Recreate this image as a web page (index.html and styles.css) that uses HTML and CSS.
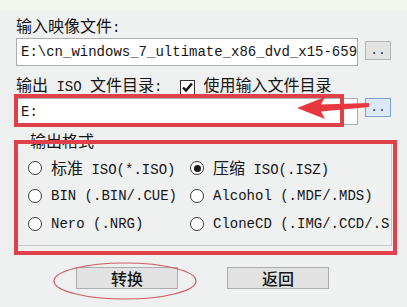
FILE: index.html
```html
<html>
<head>
  <meta charset="utf-8">
  <title>UltraISO - 格式转换</title>
  <link rel="stylesheet" href="styles.css">
</head>
<body>
  <div id="dlg">
    <div class="lbl"><span class="zh">输入映像文件</span>:</div>
    <div class="pathrow">
      <div class="field tall">E:\cn_windows_7_ultimate_x86_dvd_x15-659</div>
      <div class="browse">..</div>
    </div>

    <div class="optrow">
      <span class="lbl"><span class="zh">输出</span> ISO <span class="zh">文件目录</span>:</span>
      <span class="check">
        <svg width="15" height="15" viewBox="0 0 15 15">
          <rect x="0.5" y="0.5" width="14" height="14" fill="#fff" stroke="#333"/>
          <path d="M3 7.5 L6 10.5 L12 3.5" fill="none" stroke="#111" stroke-width="2.4"/>
        </svg>
      </span>
      <span class="zh">使用输入文件目录</span>
    </div>
    <div class="pathrow second">
      <div class="field">E:</div>
      <div class="browse hot">..</div>
    </div>

    <fieldset id="group">
      <legend><span class="zh">输出格式</span></legend>
      <div class="grid">
        <label class="opt"><span class="radio"></span><span><span class="zh">标准</span> ISO(*.ISO)</span></label>
        <label class="opt"><span class="radio on"></span><span><span class="zh">压缩</span> ISO(.ISZ)</span></label>
        <label class="opt"><span class="radio"></span><span>BIN (.BIN/.CUE)</span></label>
        <label class="opt"><span class="radio"></span><span>Alcohol (.MDF/.MDS)</span></label>
        <label class="opt"><span class="radio"></span><span>Nero (.NRG)</span></label>
        <label class="opt"><span class="radio"></span><span>CloneCD (.IMG/.CCD/.S</span></label>
      </div>
    </fieldset>

    <div class="actions">
      <div class="btn"><span class="zh">转换</span></div>
      <div class="btn"><span class="zh">返回</span></div>
    </div>
  </div>

  <!-- red marks drawn over the dialog -->
  <svg id="marks" width="407" height="307" viewBox="0 0 407 307">
    <rect x="16" y="96" width="326" height="29" fill="none" stroke="#e0404a" stroke-width="4"/>
    <rect x="16" y="142" width="379" height="111" fill="none" stroke="#e0404a" stroke-width="4"/>
    <polygon points="297,108 325,97 321,104.5 369,103 369,107 321,111.5 325,119" fill="#e8383f"/>
    <ellipse cx="125" cy="281" rx="71" ry="18" fill="none" stroke="#cf5866" stroke-width="1.2"/>
  </svg>
</body>
</html>
```

FILE: styles.css
```css
body {
  margin: 0;
  width: 407px;
  height: 307px;
  overflow: hidden;
  background: linear-gradient(#f3f6ef 0px, #f3f6ef 8px, #eff0f0 12px);
  color: #151515;
  font-family: "Liberation Mono", "Noto Sans CJK SC", monospace;
  font-size: 14px;
  line-height: 18px;
}
.zh {
  font-family: "Noto Sans CJK SC", sans-serif;
  font-size: 16px;
}
#dlg {
  padding: 16px 15px 0 16px;
}
.lbl {
  white-space: pre;
}
.pathrow {
  display: flex;
  align-items: flex-start;
  margin-top: 1px;
}
.pathrow.second {
  margin-top: 3px;
}
.field {
  flex: 1;
  height: 25px;
  padding: 0 4px;
  background: #fff;
  border: 1px solid #acadb3;
  display: flex;
  align-items: center;
  white-space: pre;
  overflow: hidden;
}
.field.tall {
  height: 26px;
}
.browse {
  width: 24px;
  height: 17px;
  margin: 3px 1px 0 7px;
  background: #e3e3e3;
  border: 1px solid #b4b4b4;
  text-align: center;
  line-height: 17px;
  font-size: 13px;
  color: #333;
  overflow: hidden;
}
.second .browse {
  margin-top: 0;
}
.browse.hot {
  background: #dbe9f7;
  border-color: #7fa3c8;
}
.optrow {
  display: flex;
  align-items: flex-start;
  margin-top: 9px;
  height: 20px;
}
.check {
  margin: 5px 8px 0 18px;
  height: 15px;
}
.check svg {
  display: block;
}
#group {
  margin: 6px 0 0 1px;
  padding: 5px 1px 7px 10px;
  border: 1px solid #c3c8cc;
}
#group legend {
  padding: 0 2px;
  margin-left: 0;
}
.grid {
  display: grid;
  grid-template-columns: 162px 1fr;
  grid-auto-rows: 28px;
}
.opt {
  display: flex;
  align-items: center;
  white-space: pre;
  overflow: hidden;
}
.radio {
  width: 12px;
  height: 12px;
  border: 1px solid #3a3a3a;
  border-radius: 50%;
  background: #fff;
  margin-right: 9px;
  flex: none;
  position: relative;
}
.radio.on::after {
  content: "";
  position: absolute;
  left: 2.5px;
  top: 2.5px;
  width: 7px;
  height: 7px;
  border-radius: 50%;
  background: #1a1a1a;
}
.actions {
  display: flex;
  gap: 49px;
  margin-top: 21px;
  padding-left: 60px;
}
.btn {
  width: 100px;
  height: 20px;
  background: #e2e2e2;
  border: 1px solid #adadad;
  display: flex;
  align-items: center;
  justify-content: center;
}
.btn .zh {
  font-weight: 500;
}
#marks {
  position: absolute;
  left: 0;
  top: 0;
  pointer-events: none;
}
```
